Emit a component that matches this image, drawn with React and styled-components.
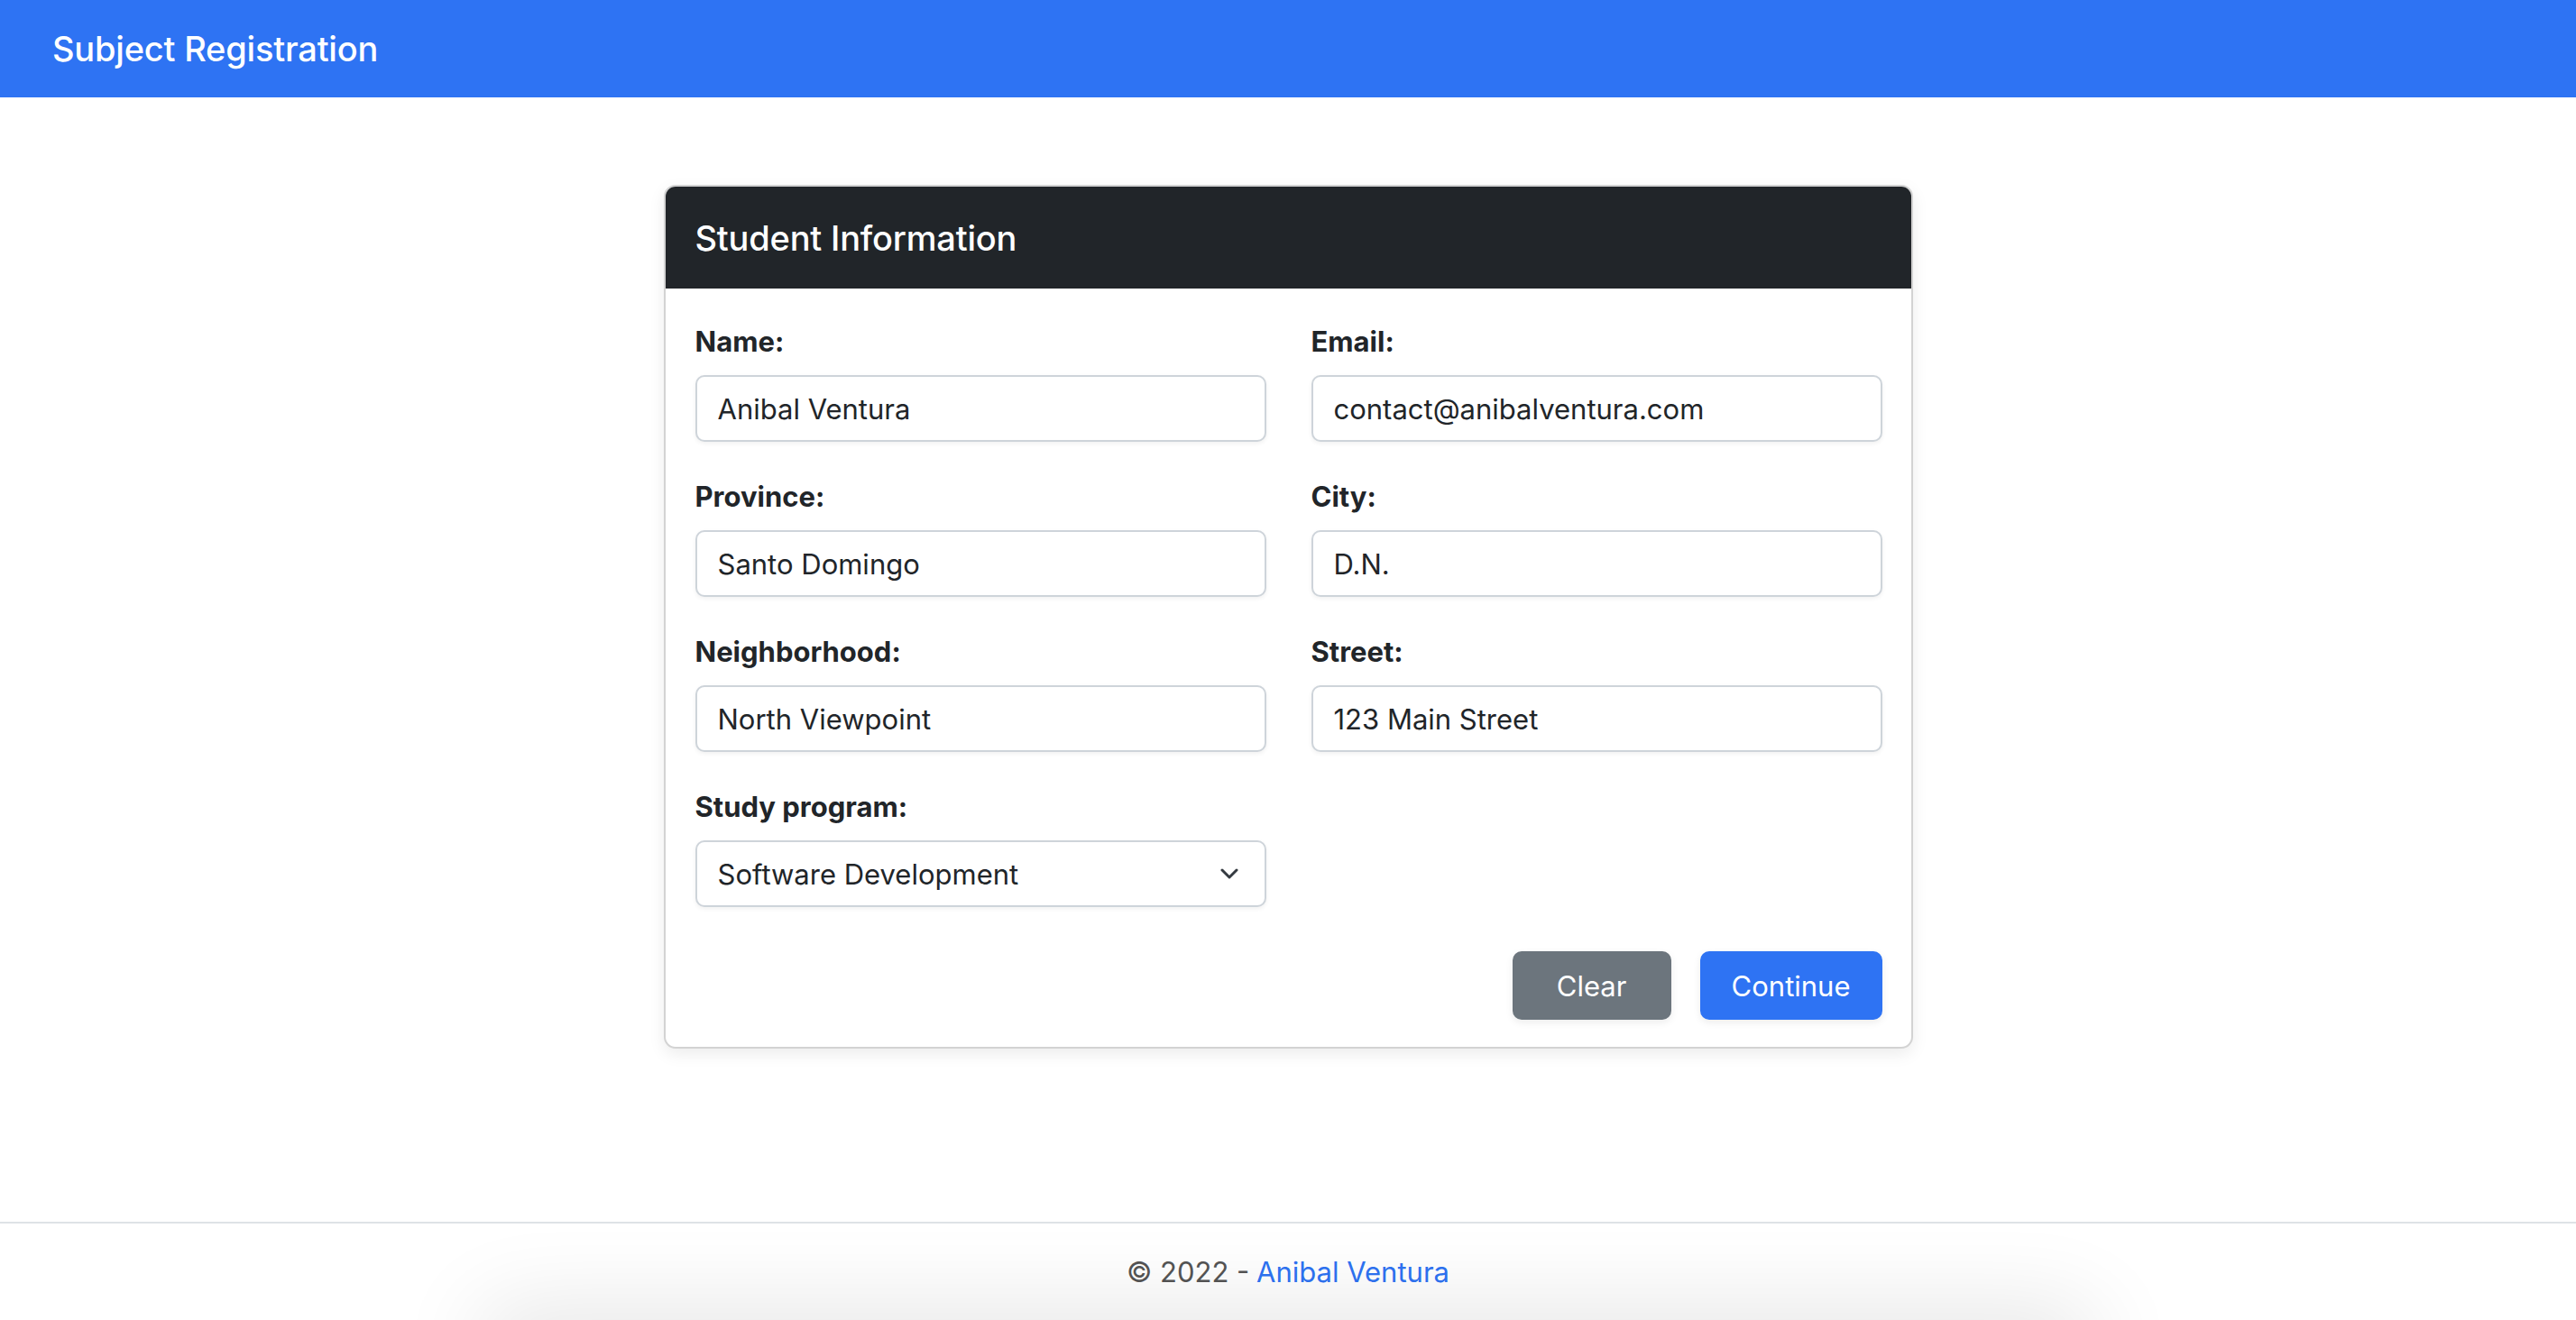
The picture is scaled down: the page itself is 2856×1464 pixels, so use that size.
import styled, { createGlobalStyle } from "styled-components";

const GlobalStyle = createGlobalStyle`
  * {
    box-sizing: border-box;
  }
  html,
  body {
    margin: 0;
    padding: 0;
  }
  body {
    font-family: Inter, "Noto Sans", sans-serif;
    color: #212529;
    background: #fff;
  }
`;

const fields = [
  { label: "Name:", value: "Anibal Ventura" },
  { label: "Email:", value: "contact@anibalventura.com" },
  { label: "Province:", value: "Santo Domingo" },
  { label: "City:", value: "D.N." },
  { label: "Neighborhood:", value: "North Viewpoint" },
  { label: "Street:", value: "123 Main Street" },
];

const Chevron = () => (
  <svg width="20" height="12" viewBox="0 0 20 12" fill="none">
    <path
      d="M2 2l8 8 8-8"
      stroke="#343a40"
      strokeWidth="3"
      strokeLinecap="round"
      strokeLinejoin="round"
    />
  </svg>
);

const App = () => {
  return (
    <Page>
      <GlobalStyle />
      <Navbar>
        <Brand>Subject Registration</Brand>
      </Navbar>

      <Main>
        <Card>
          <CardHeader>Student Information</CardHeader>
          <CardBody>
            <FormGrid>
              {fields.map((f) => (
                <Field key={f.label}>
                  <Label>{f.label}</Label>
                  <Input type="text" defaultValue={f.value} />
                </Field>
              ))}
              <Field>
                <Label>Study program:</Label>
                <SelectWrap>
                  <Select defaultValue="software">
                    <option value="software">Software Development</option>
                    <option value="networks">Networks</option>
                    <option value="design">Design</option>
                  </Select>
                  <SelectIcon>
                    <Chevron />
                  </SelectIcon>
                </SelectWrap>
              </Field>
            </FormGrid>

            <Actions>
              <Button variant="secondary">Clear</Button>
              <Button variant="primary">Continue</Button>
            </Actions>
          </CardBody>
        </Card>
      </Main>

      <Footer>
        © 2022 - <FooterLink href="#">Anibal Ventura</FooterLink>
      </Footer>
    </Page>
  );
};

const Page = styled.div`
  min-height: 100vh;
  display: flex;
  flex-direction: column;
  overflow: hidden;
`;

const Navbar = styled.nav`
  height: 108px;
  background: #2e73f3;
  display: flex;
  align-items: center;
  padding: 0 58px;
`;

const Brand = styled.span`
  color: #fff;
  font-size: 38px;
  font-weight: 500;
  letter-spacing: -0.2px;
`;

const Main = styled.main`
  flex: 1;
  display: flex;
  justify-content: center;
  align-items: flex-start;
  padding-top: 97px;
`;

const Card = styled.section`
  width: 1385px;
  background: #fff;
  border: 2px solid #d3d3d3;
  border-radius: 13px;
  overflow: hidden;
  box-shadow: 0 6px 18px rgba(0, 0, 0, 0.08);
`;

const CardHeader = styled.header`
  height: 113px;
  background: #212529;
  color: #fff;
  display: flex;
  align-items: center;
  padding: 0 33px;
  font-size: 38px;
  font-weight: 500;
  letter-spacing: -0.2px;
`;

const CardBody = styled.div`
  padding: 37px 32px 30px 33px;
`;

const FormGrid = styled.div`
  display: grid;
  grid-template-columns: 1fr 1fr;
  column-gap: 50px;
  row-gap: 39px;
`;

const Field = styled.div`
  display: flex;
  flex-direction: column;
`;

const Label = styled.label`
  font-size: 31px;
  line-height: 44px;
  font-weight: 700;
  margin-bottom: 15px;
  color: #212529;
`;

const Input = styled.input`
  height: 74px;
  width: 100%;
  border: 2px solid #ced4da;
  border-radius: 10px;
  padding: 0 23px;
  font-family: inherit;
  font-size: 31px;
  color: #212529;
  background: #fff;
  box-shadow: 0 2px 5px rgba(0, 0, 0, 0.06);
  outline: none;
`;

const SelectWrap = styled.div`
  position: relative;
`;

const Select = styled.select`
  appearance: none;
  height: 74px;
  width: 100%;
  border: 2px solid #ced4da;
  border-radius: 10px;
  padding: 0 23px;
  font-family: inherit;
  font-size: 31px;
  color: #212529;
  background: #fff;
  box-shadow: 0 2px 5px rgba(0, 0, 0, 0.06);
  outline: none;
`;

const SelectIcon = styled.span`
  position: absolute;
  right: 31px;
  top: 50%;
  transform: translateY(-50%);
  display: flex;
  pointer-events: none;
`;

const Actions = styled.div`
  display: flex;
  justify-content: flex-end;
  gap: 32px;
  margin-top: 49px;
`;

const Button = styled.button`
  height: 76px;
  min-width: 176px;
  padding: 0 35px;
  border: none;
  border-radius: 10px;
  font-family: inherit;
  font-size: 31px;
  color: #fff;
  background: ${(p) => (p.variant === "primary" ? "#2e73f3" : "#6c757d")};
  box-shadow: 0 3px 8px rgba(0, 0, 0, 0.08);
  cursor: pointer;
`;

const Footer = styled.footer`
  position: relative;
  height: 109px;
  border-top: 2px solid #dee2e6;
  display: flex;
  justify-content: center;
  align-items: center;
  font-size: 31px;
  color: #555;
  overflow: hidden;

  &::after {
    content: "";
    position: absolute;
    left: 560px;
    right: 560px;
    top: calc(100% + 12px);
    height: 40px;
    box-shadow: 0 0 100px 24px rgba(0, 0, 0, 0.11);
  }
`;

const FooterLink = styled.a`
  color: #2e73f3;
  text-decoration: none;
  margin-left: 0.25em;
`;

export default App;
